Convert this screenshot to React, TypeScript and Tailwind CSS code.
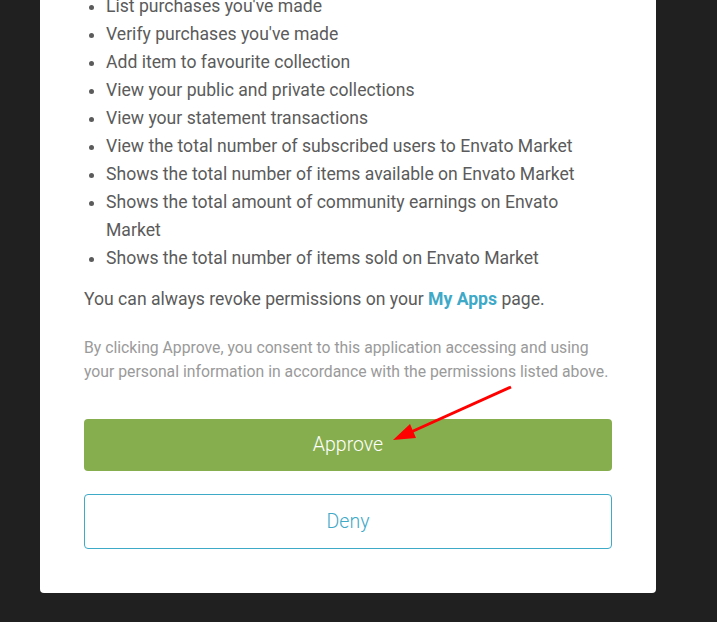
import React from "react";

const permissions = [
  "List purchases you've made",
  "Verify purchases you've made",
  "Add item to favourite collection",
  "View your public and private collections",
  "View your statement transactions",
  "View the total number of subscribed users to Envato Market",
  "Shows the total number of items available on Envato Market",
  "Shows the total amount of community earnings on Envato Market",
  "Shows the total number of items sold on Envato Market",
];

const App: React.FC = () => {
  return (
    <div className="min-h-[622px] w-full bg-[#1f201f] font-['Roboto',sans-serif] overflow-hidden">
      <div className="relative ml-[40px] w-[616px] bg-white rounded-b-[4px] px-[44px] pb-[44px]">
        {/* Permission list */}
        <ul className="-mt-[8px] list-disc pl-[22px] text-[17.6px] leading-[28px] text-[#5b5b5b] marker:text-[#5b5b5b]">
          {permissions.map((item) => (
            <li key={item}>{item}</li>
          ))}
        </ul>

        <p className="mt-[13px] text-[17.6px] leading-[28px] text-[#5b5b5b]">
          You can always revoke permissions on your{" "}
          <a href="#" className="font-bold text-[#3fa9c8]">
            My Apps
          </a>{" "}
          page.
        </p>

        <p className="mt-[23px] text-[15.75px] leading-[24px] text-[#9a9a9a]">
          By clicking Approve, you consent to this application accessing and
          using your personal information in accordance with the permissions
          listed above.
        </p>

        {/* Actions */}
        <div className="mt-[35px] flex flex-col gap-[23px]">
          <button className="h-[52px] w-full rounded-[4px] bg-[#87ae4e] text-[19.5px] font-light text-white">
            Approve
          </button>
          <button className="h-[55px] w-full rounded-[4px] border border-[#3fa9c8] bg-white text-[19.5px] font-light text-[#3fa9c8]">
            Deny
          </button>
        </div>

        {/* Annotation arrow */}
        <svg
          className="pointer-events-none absolute left-0 top-0"
          width="616"
          height="622"
          viewBox="40 0 616 622"
        >
          <line x1="511" y1="395" x2="411" y2="440" stroke="#ff0000" strokeWidth="3" />
          <polygon points="393,448 416,446 410,432" fill="#ff0000" />
        </svg>
      </div>
    </div>
  );
};

export default App;
